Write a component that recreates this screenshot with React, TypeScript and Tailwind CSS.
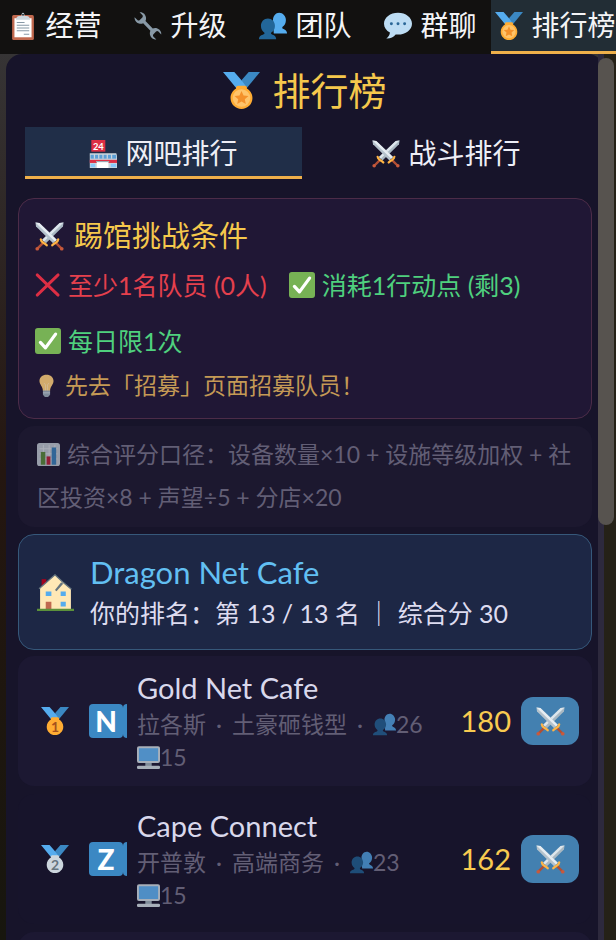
import { useState } from "react";
import type { ReactNode } from "react";
import { clsx } from "clsx";

interface IconProps {
  className?: string;
}

function Svg({ className, children }: { className?: string; children: ReactNode }) {
  return (
    <svg viewBox="0 0 36 36" aria-hidden="true" className={clsx("shrink-0", className)}>
      {children}
    </svg>
  );
}

function ClipboardIcon({ className }: IconProps) {
  return (
    <Svg className={className}>
      <rect x="4" y="4" width="28" height="32" rx="2" fill="#c1694f" />
      <path d="M7 8h22v24.500H7z" fill="#fff" />
      <path d="M23 5h-3c0-1.700-.6-4-2-4s-2 2.300-2 4h-3c-2 0-4 2-4 5h18c0-3-2-5-4-5z" fill="#ccd6dd" />
      <circle cx="18" cy="3.500" r="1.300" fill="#292f33" />
      <path d="M10 13.500h10M10 17h16M10 20.500h16M10 24h16M19 28.500h7" stroke="#8899a6" strokeWidth="1.300" />
    </Svg>
  );
}

function WrenchIcon({ className }: IconProps) {
  return (
    <Svg className={className}>
      <path
        fill="#8899a6"
        d="M27.500 18.900c-1.700-.5-3.500-.3-5 .4L13.800 10.600c.7-1.500.9-3.300.4-5C13.500 3 11.500 1.100 9 .4c-.8-.2-1.600-.3-2.300-.2L10 3.500c.8.800.8 2 0 2.800L6.900 9.400c-.8.800-2 .8-2.800 0L.7 6c-.1.800 0 1.600.2 2.400.7 2.500 2.600 4.400 5.100 5.100 1.700.5 3.500.3 5-.4l8.700 8.700c-.7 1.500-.9 3.300-.4 5 .7 2.500 2.600 4.400 5.100 5.100.8.200 1.600.3 2.400.2l-3.400-3.300c-.8-.8-.8-2 0-2.800l3.100-3.100c.8-.8 2-.8 2.800 0l3.400 3.300c.1-.8 0-1.600-.2-2.400-.7-2.300-2.500-4.200-5-4.900z"
        transform="scale(1.070 1.100)"
      />
    </Svg>
  );
}

function TeamIcon({ className }: IconProps) {
  return (
    <Svg className={className}>
      <path
        fill="#55acee"
        d="M18 10.300C18 5.400 21.400 1 26 1s8.600 4.300 8.600 9.300c0 4-1.700 7.500-4.600 8.900v1.300c0 1.500 5.500 1.700 6 6.200v.8H19z"
      />
      <path
        fill="#269"
        d="M2.500 18C2.500 12.500 6.300 8.500 11.500 8.500s9 4 9 9.500c0 4-2 7.200-5 8.600v1.200c0 1.600 6 1.700 6.500 6.200v1H0v-1c.5-4.500 7-4.600 7-6.200v-1.200C4.500 25.200 2.500 22 2.500 18z"
      />
    </Svg>
  );
}

function ChatIcon({ className }: IconProps) {
  return (
    <Svg className={className}>
      <path
        fill="#bdddf4"
        d="M18 1C8 1 0 7.300 0 15c0 4.800 3 8.900 7.600 11.400-.2 3-1.800 5.700-4.600 7.600 5 .3 9.300-1.700 12-5.200 1 .1 2 .2 3 .2 10 0 18-6.300 18-14S28 1 18 1z"
      />
      <circle cx="9.500" cy="15" r="1.900" fill="#2a6797" />
      <circle cx="18" cy="15" r="1.900" fill="#2a6797" />
      <circle cx="26.500" cy="15" r="1.900" fill="#2a6797" />
    </Svg>
  );
}

function MedalIcon({ className, rank }: IconProps & { rank?: number }) {
  const silver = rank === 2;
  const bronze = rank === 3;
  return (
    <Svg className={className}>
      <path fill="#55acee" d="M18 8l-7-8H0l14 17 11.521-4.750z" />
      <path fill="#3b88c3" d="M25 0l-7 8 5.390 7.312 1.227-1.489L36 0z" />
      <path
        fill={silver ? "#ccd6dd" : bronze ? "#ff8a3b" : "#ffac33"}
        d="M23.205 16.026c.08-.217.131-.448.131-.693 0-1.104-.896-2-2-2h-6.667c-1.105 0-2 .896-2 2 0 .245.050.476.131.693-3.258 1.826-5.464 5.307-5.464 9.307C7.336 31.224 12.111 36 18.002 36s10.667-4.776 10.667-10.667c0-4-2.206-7.481-5.464-9.307z"
      />
      {rank ? (
        <text
          x="18"
          y="31.500"
          textAnchor="middle"
          fontSize="18"
          fontWeight="bold"
          fill={silver ? "#66757f" : "#a5501d"}
        >
          {rank}
        </text>
      ) : (
        <>
          <circle cx="18" cy="25.300" r="8.500" fill="#ffc46a" />
          <path
            fill="#f4912a"
            d="M18 18.400l2 4.400 4.800.5-3.600 3.200 1 4.700-4.200-2.400-4.200 2.400 1-4.700-3.600-3.200 4.800-.5z"
          />
        </>
      )}
    </Svg>
  );
}

function SwordsIcon({ className }: IconProps) {
  return (
    <Svg className={className}>
      <path fill="#a9b8c2" d="M35.500.5l-5 .8L9 22l4.500 4.500L34.700 5.500z" />
      <path fill="#dde6ec" d="M35.500.5l-5 .8L9 22l2.200 2.200z" />
      <path fill="#b4c2cc" d="M.5.5l5 .8L27 22l-4.500 4.500L1.300 5.500z" />
      <path fill="#e6edf2" d="M.5.5l5 .8L27 22l-2.200 2.200z" />
      <path d="M10.500 25.500l-7 7M25.500 25.500l7 7" stroke="#b04f35" strokeWidth="3" />
      <circle cx="2.800" cy="33.200" r="2.300" fill="#c9593c" />
      <circle cx="33.200" cy="33.200" r="2.300" fill="#c9593c" />
      <path d="M7.200 21.500c.3 2.600 1 3 2.800 4s3 1.400 4.600 3.400" stroke="#ffb545" strokeWidth="2.800" fill="none" strokeLinecap="round" />
      <path d="M28.800 21.500c-.3 2.600-1 3-2.800 4s-3 1.400-4.600 3.400" stroke="#ffb545" strokeWidth="2.800" fill="none" strokeLinecap="round" />
    </Svg>
  );
}

function StoreIcon({ className }: IconProps) {
  return (
    <Svg className={className}>
      <rect x="3" y="0" width="18" height="15" fill="#dd2e44" />
      <text x="12" y="12.500" textAnchor="middle" fontSize="12" fontWeight="bold" fill="#fff">
        24
      </text>
      <path fill="#ccd6dd" d="M1 17h34l1 3v16H1z" />
      <path fill="#5c9fd6" d="M2 19h33v5H2z" />
      <path d="M7 18v6M12.500 18v6M18 18v6M23.500 18v6M29 18v6" stroke="#ccd6dd" strokeWidth="1.600" />
      <path fill="#dd2e44" d="M1 25.500h35v4H1z" />
      <path fill="#88c9f9" d="M2 30.500h6V35H2zM28 30.500h7V35h-7z" />
      <path fill="#fff" d="M10 28h15v8H10z" />
      <path fill="#99aab5" d="M9 27h17v1.500H9z" />
    </Svg>
  );
}

function CrossIcon({ className }: IconProps) {
  return (
    <Svg className={className}>
      <path d="M3 4l29 28M32 4L3 32" stroke="#dd2e44" strokeWidth="4" strokeLinecap="round" />
    </Svg>
  );
}

function CheckIcon({ className }: IconProps) {
  return (
    <Svg className={className}>
      <rect width="36" height="36" rx="4" fill="#77b255" />
      <path d="M7.500 20l7 7.500L28.500 8.500" stroke="#fff" strokeWidth="4.500" strokeLinecap="round" strokeLinejoin="round" fill="none" />
    </Svg>
  );
}

function BulbIcon({ className }: IconProps) {
  return (
    <Svg className={className}>
      <path
        fill="#ffd07a"
        d="M29 11.100C29 5.100 24.500 1 18 1S7 5.100 7 11.100c0 6 5.400 8.200 5.400 15.900h11.200C23.600 19.300 29 17.100 29 11.100z"
      />
      <path d="M14 14l2.500 3V27M22 14l-2.500 3V27" stroke="#ffe8b6" strokeWidth="1.200" fill="none" />
      <path fill="#99aab5" d="M12.400 26h11.200v6.500L20.500 36h-5l-3.100-3.500z" />
      <path d="M12.400 29.500h11.200" stroke="#ccd6dd" strokeWidth="1.500" />
    </Svg>
  );
}

function ChartIcon({ className }: IconProps) {
  return (
    <Svg className={className}>
      <rect width="36" height="36" rx="4" fill="#ccd6dd" />
      <path d="M4 9h28M4 17h28M4 25h28M10 3v30M19 3v30M28 3v30" stroke="#e9eff3" strokeWidth="1.500" />
      <path fill="#5c913b" d="M6 14h7v20H6z" />
      <path fill="#c4213a" d="M15 21h6v13h-6z" />
      <path fill="#3b88c3" d="M23 7h7v27h-7z" />
    </Svg>
  );
}

function HouseIcon({ className }: IconProps) {
  return (
    <Svg className={className}>
      <path fill="#a0041e" d="M4.500 5h4.500v8H4.500z" />
      <path fill="#ffe8b6" d="M3 13.500L17.500 1l6.500 6 9 7.500V35H3z" />
      <path d="M2 14.300L17.500.8l7.500 7 8.500 7" stroke="#66757f" strokeWidth="1.300" fill="none" />
      <path fill="#66757f" d="M23.500 8l-6 7.500 1.500 1.200L25.500 9.500z" />
      <path fill="#55acee" d="M8.500 17H14v4.500H8.500zM23 17h5v4.500h-5zM23 27h5v4.500h-5z" />
      <path fill="#c1694f" d="M8.500 27H14v8H8.500z" />
      <path fill="#5c913b" d="M0 33.800h36V36H0z" />
    </Svg>
  );
}

function DesktopIcon({ className }: IconProps) {
  return (
    <Svg className={className}>
      <path fill="#99aab5" d="M13 26h10v6H13z" />
      <rect y="0.500" width="36" height="26" rx="3" fill="#ccd6dd" />
      <path fill="#5dadec" d="M3 3.500h30v20H3z" />
      <rect y="31" width="36" height="5" rx="2" fill="#ccd6dd" />
    </Svg>
  );
}

const NAV_ITEMS = [
  { id: "manage", label: "经营", Icon: ClipboardIcon },
  { id: "upgrade", label: "升级", Icon: WrenchIcon },
  { id: "team", label: "团队", Icon: TeamIcon },
  { id: "chat", label: "群聊", Icon: ChatIcon },
  { id: "rank", label: "排行榜", Icon: MedalIcon },
];

const TABS = [
  { id: "cafe", label: "网吧排行", Icon: StoreIcon },
  { id: "battle", label: "战斗排行", Icon: SwordsIcon },
];

const CONDITIONS = [
  { text: "至少1名队员 (0人)", met: false },
  { text: "消耗1行动点 (剩3)", met: true },
  { text: "每日限1次", met: true },
];

interface Cafe {
  rank: number;
  flag: string;
  name: string;
  city: string;
  style: string;
  staff: number;
  machines: number;
  score: number;
}

const CAFES: Cafe[] = [
  { rank: 1, flag: "N", name: "Gold Net Cafe", city: "拉各斯", style: "土豪砸钱型", staff: 26, machines: 15, score: 180 },
  { rank: 2, flag: "Z", name: "Cape Connect", city: "开普敦", style: "高端商务", staff: 23, machines: 15, score: 162 },
];

function TopNav() {
  const [active, setActive] = useState("rank");
  return (
    <nav className="flex shrink-0 justify-end overflow-hidden bg-[#121110]">
      {NAV_ITEMS.map(({ id, label, Icon }) => (
        <button
          key={id}
          onClick={() => setActive(id)}
          className={clsx(
            "flex w-[125px] shrink-0 items-center justify-center gap-2 whitespace-nowrap border-b-[3px] pl-1 text-[28px] leading-[51px] text-[#f4f4f6]",
            active === id ? "border-[#efb04a] bg-[#222d35]" : "border-transparent"
          )}
        >
          <Icon className="size-7" />
          {label}
        </button>
      ))}
    </nav>
  );
}

function RankTabs() {
  const [tab, setTab] = useState("cafe");
  return (
    <div className="mx-[7px] mt-3 flex gap-1.5">
      {TABS.map(({ id, label, Icon }) => (
        <button
          key={id}
          onClick={() => setTab(id)}
          className={clsx(
            "flex flex-1 items-center justify-center gap-2 border-b-[3px] pt-1 text-[28px] leading-[45px] text-[#eeeef6]",
            tab === id ? "border-[#efb04a] bg-[#202e48]" : "border-transparent"
          )}
        >
          <Icon className="size-7" />
          {label}
        </button>
      ))}
    </div>
  );
}

function ChallengeCard() {
  return (
    <section className="mt-[19px] rounded-2xl border border-[#4c2c48] bg-[#201735] px-4 pt-4 pb-3 leading-[42px]">
      <h2 className="flex items-center gap-2.5 text-[29px] text-[#f5c84c]">
        <SwordsIcon className="size-[29px]" />
        踢馆挑战条件
      </h2>
      <ul className="mt-[7px] flex flex-wrap gap-x-[22px] gap-y-3.5 text-[25px]">
        {CONDITIONS.map((c) => (
          <li
            key={c.text}
            className={clsx("flex items-center gap-[7px]", c.met ? "text-[#4fd07e]" : "text-[#e5404d]")}
          >
            {c.met ? <CheckIcon className="size-[26px]" /> : <CrossIcon className="size-[26px]" />}
            {c.text}
          </li>
        ))}
      </ul>
      <p className="mt-0.5 flex items-center gap-[7px] text-[23px] text-[#c49a55]">
        <BulbIcon className="size-[23px] opacity-80" />
        先去「招募」页面招募队员！
      </p>
    </section>
  );
}

function ScoreRule() {
  return (
    <p className="mt-[7px] rounded-2xl bg-[#1c182f] pt-[7px] pr-3 pb-2 pl-[19px] text-[23px] leading-[43px] text-[#625e75]">
      <ChartIcon className="mr-[7px] inline size-[23px] align-[-3px] opacity-70" />
      综合评分口径：设备数量×10 + 设施等级加权 + 社区投资×8 + 声望÷5 + 分店×20
    </p>
  );
}

function MyRankCard() {
  return (
    <section className="mt-[7px] flex items-center gap-4 rounded-2xl border border-[#36587a] bg-[#1d2745] px-[18px] py-4">
      <HouseIcon className="size-[37px]" />
      <div>
        <h2 className="text-[31px] leading-[42px] text-[#62bff2]">Dragon Net Cafe</h2>
        <p className="text-[25px] leading-[40px] text-[#dddcf0]">你的排名：第 13 / 13 名 ｜ 综合分 30</p>
      </div>
    </section>
  );
}

// The country flag shows as a letter tile, the next tile is cut off by the column
function FlagTile({ letter }: { letter: string }) {
  return (
    <span className="flex w-[38px] shrink-0 overflow-hidden">
      <span className="flex h-[34px] w-[34px] shrink-0 items-center justify-center rounded-sm bg-[#3b88c3] text-[28px] font-black text-white">
        {letter}
      </span>
      <span className="h-[34px] w-[34px] shrink-0 rounded-sm bg-[#3b88c3]" />
    </span>
  );
}

function Dot() {
  return <span className="px-2.5">·</span>;
}

function CafeRow({ cafe }: { cafe: Cafe }) {
  return (
    <li className="flex items-center gap-2.5 rounded-2xl border border-transparent px-3 py-[11px] odd:bg-[#1c1832] even:bg-[#17142b]">
      <span className="flex w-12 shrink-0 justify-center">
        <MedalIcon rank={cafe.rank} className="size-7" />
      </span>
      <FlagTile letter={cafe.flag} />
      <div className="min-w-0 flex-1">
        <h3 className="text-[29px] leading-[40px] text-[#d9d8ec]">{cafe.name}</h3>
        <p className="flex items-center whitespace-nowrap text-[23px] leading-[33px] text-[#625e75]">
          {cafe.city}
          <Dot />
          {cafe.style}
          <Dot />
          <TeamIcon className="size-[23px] opacity-70" />
          {cafe.staff}
        </p>
        <p className="flex items-center text-[23px] leading-[33px] text-[#625e75]">
          <DesktopIcon className="size-[23px] opacity-80" />
          {cafe.machines}
        </p>
      </div>
      <strong className="text-[29px] font-normal text-[#f8cb50]">{cafe.score}</strong>
      <button
        aria-label={`挑战 ${cafe.name}`}
        className="flex h-12 w-[58px] shrink-0 items-center justify-center rounded-xl bg-[#4380b0]"
      >
        <SwordsIcon className="size-[29px]" />
      </button>
    </li>
  );
}

export default function App() {
  return (
    <div className="flex h-screen flex-col overflow-hidden bg-linear-to-b from-[#38383a] via-[#241610] to-[#17160e] font-[Lato,'Noto_Sans_CJK_SC',sans-serif]">
      <TopNav />
      <div className="flex min-h-0 flex-1 pl-[6px]">
        <main className="min-w-0 flex-1 overflow-y-auto rounded-t-2xl bg-[#17142a] px-3 [scrollbar-width:none]">
          <h1 className="flex items-center justify-center gap-3 pt-[11px] text-[38px] leading-[50px] text-[#f5c84c]">
            <MedalIcon className="size-[37px]" />
            排行榜
          </h1>
          <RankTabs />
          <ChallengeCard />
          <ScoreRule />
          <MyRankCard />
          <ul className="mt-1.5 flex flex-col gap-2">
            {CAFES.map((cafe) => (
              <CafeRow key={cafe.rank} cafe={cafe} />
            ))}
            <li className="h-32 rounded-2xl bg-[#1c1832]" />
          </ul>
        </main>
        <div className="-ml-1.5 flex w-[18px] shrink-0 flex-col bg-linear-to-r from-[#2d293d] from-35% to-[#252117] to-35% pt-1">
          <div className="h-[53%] w-4 rounded-full bg-[#57534f]" />
        </div>
      </div>
    </div>
  );
}
